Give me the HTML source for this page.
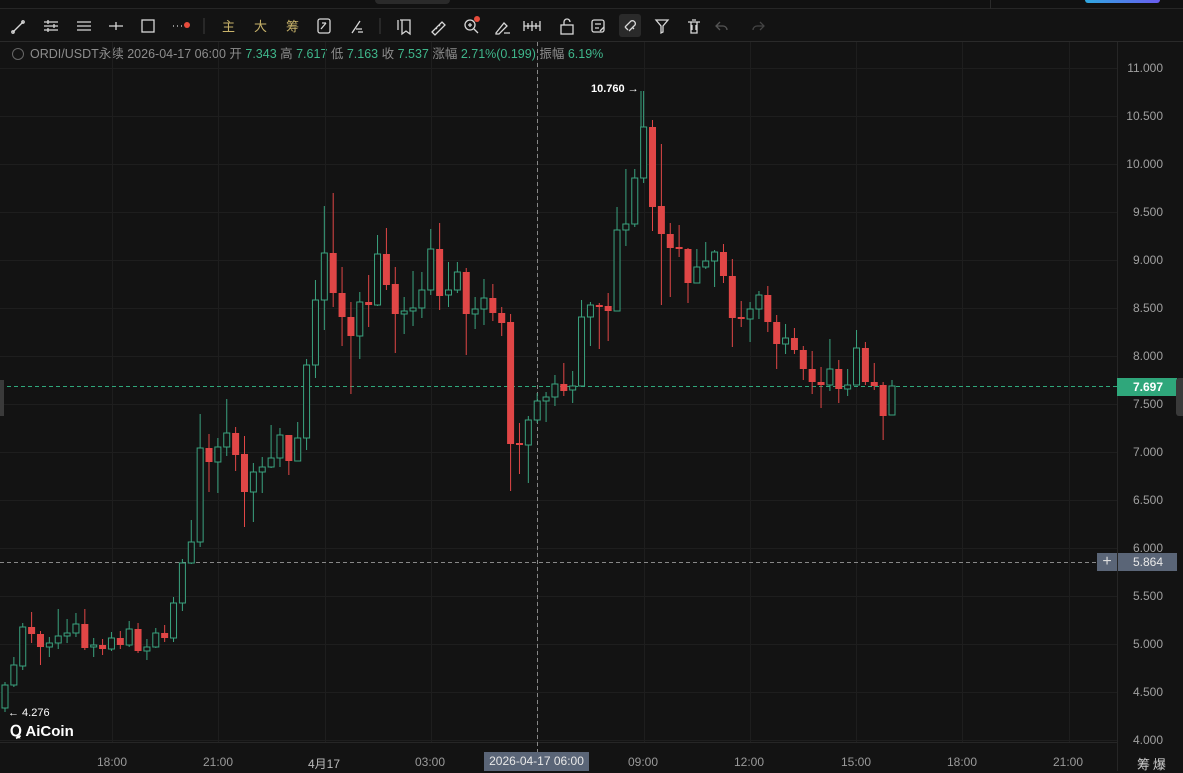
<!DOCTYPE html>
<html><head><meta charset="utf-8"><style>
*{margin:0;padding:0;box-sizing:border-box}
body{width:1183px;height:771px;background:#131313;overflow:hidden;font-family:"Liberation Sans","Noto Sans CJK SC",sans-serif;position:relative}
.top{position:absolute;left:0;top:0;width:1183px;height:9px;background:#111;border-bottom:1px solid #262626}
.tb{position:absolute;left:0;top:9px;width:1183px;height:33px;background:#131313;border-bottom:1px solid #2a2a2a}
.info{position:absolute;left:12px;top:43px;font-size:12.5px;color:#8d8d8d;white-space:nowrap}
.info b{font-weight:normal;color:#3fb68b}
.pl{position:absolute;right:20px;font-size:12px;color:#a0a0a0;text-align:right;width:60px}
.tl{position:absolute;top:755px;font-size:12px;color:#9a9a9a;transform:translateX(-50%)}
</style></head><body>
<div class="top"><div style="position:absolute;left:375px;top:0;width:75px;height:4px;background:#2a2a2a;border-radius:0 0 4px 4px"></div><div style="position:absolute;left:990px;top:0;width:1px;height:9px;background:#2a2a2a"></div><div style="position:absolute;left:1085px;top:0;width:75px;height:3px;background:linear-gradient(90deg,#2fa8e0,#6a5cf0);border-radius:0 0 6px 6px"></div></div>
<div class="tb"></div>
<svg style="position:absolute;left:0;top:9px" width="800" height="33" fill="none" stroke="#d8d8d8" stroke-width="1.3">
<path d="M13 23L23 13"/><circle cx="13" cy="23" r="1.2"/><circle cx="23" cy="13" r="1.2"/>
<path d="M44 13h14M44 17h14M44 21h14M48 11v4M54 15v4M48 19v4"/>
<path d="M77 13h14M77 17h14M77 21h14"/>
<path d="M109 17h14M116 13v8"/>
<rect x="142" y="11" width="12" height="12"/>
<path d="M173 17h1M177 17h1M181 17h1"/><circle cx="187" cy="16" r="3" fill="#e74c3c" stroke="none"/>
<path d="M204 9v16" stroke="#333"/>
<text x="222" y="22" font-size="13" fill="#c8b36a" stroke="none" font-family="Noto Sans CJK SC">主</text>
<text x="254" y="22" font-size="13" fill="#c8b36a" stroke="none" font-family="Noto Sans CJK SC">大</text>
<text x="286" y="22" font-size="13" fill="#c8b36a" stroke="none" font-family="Noto Sans CJK SC">筹</text>
<rect x="318" y="10" width="12" height="14" rx="2"/><path d="M321 20l5-6M322 14h4"/>
<path d="M352 24l8-12M356 20h6M358 23h5"/>
<path d="M380 9v16" stroke="#333"/>
<path d="M400 11h10v14l-4-3-4 3V11M398 11v10"/>
<path d="M432 23l10-10 3 3-10 10z M436 19l1 1M439 16l1 1"/>
<circle cx="470" cy="16" r="5"/><path d="M474 20l4 4M468 16h4M470 14v4"/><circle cx="477" cy="10" r="3" fill="#e74c3c" stroke="none"/>
<path d="M496 24l8-10 3 3-8 8h-3zM504 24h6"/>
<path d="M524 12v10M528 14v6M532 12v10M536 14v6M540 12v10M524 17h16"/>
<rect x="561" y="16" width="12" height="9"/><path d="M564 16v-3a3 3 0 0 1 6 0"/>
<rect x="592" y="11" width="12" height="12" rx="2"/><path d="M595 15h6M595 19h4M600 22l4-4"/>
<rect x="619" y="5" width="22" height="23" rx="3" fill="#2a2a2a" stroke="none"/>
<path d="M625 18l6-6a3 3 0 0 1 4 4l-6 6M628 21l-3-3M632 18l2 2"/>
<path d="M656 11h12l-5 6v6l-2 1v-7z"/>
<path d="M688 13h12M691 13v11h6V13M692 11h4M692 16v5M696 16v5"/>
<path d="M720 13l-4 4 4 4M716 17h7a4 4 0 0 1 4 4" stroke="#555"/>
<path d="M760 13l4 4-4 4M764 17h-7a4 4 0 0 0-4 4" stroke="#444"/>
</svg>
<div class="info"><span style="display:inline-block;width:12px;height:12px;border:1px solid #666;border-radius:50%;vertical-align:-2px;margin-right:6px"></span>ORDI/USDT永续 2026-04-17 06:00 开 <b>7.343</b> 高 <b>7.617</b> 低 <b>7.163</b> 收 <b>7.537</b> 涨幅 <b>2.71%(0.199)</b> 振幅 <b>6.19%</b></div>
<svg id="ch" style="position:absolute;left:0;top:0" width="1183" height="771"></svg>
<div class="pl" style="top:61px">11.000</div>
<div class="pl" style="top:109px">10.500</div>
<div class="pl" style="top:157px">10.000</div>
<div class="pl" style="top:205px">9.500</div>
<div class="pl" style="top:253px">9.000</div>
<div class="pl" style="top:301px">8.500</div>
<div class="pl" style="top:349px">8.000</div>
<div class="pl" style="top:397px">7.500</div>
<div class="pl" style="top:445px">7.000</div>
<div class="pl" style="top:493px">6.500</div>
<div class="pl" style="top:541px">6.000</div>
<div class="pl" style="top:589px">5.500</div>
<div class="pl" style="top:637px">5.000</div>
<div class="pl" style="top:685px">4.500</div>
<div class="pl" style="top:733px">4.000</div>
<div style="position:absolute;left:1117px;top:378px;width:60px;height:18px;background:#2fa77b;color:#fff;font-size:12px;font-weight:bold;line-height:18px;text-align:right;padding-right:14px">7.697</div>
<div style="position:absolute;left:1097px;top:553px;width:20px;height:18px;background:#5a6577;color:#ddd;font-size:16px;line-height:17px;text-align:center">+</div>
<div style="position:absolute;left:1118px;top:553px;width:59px;height:18px;background:#5a6577;color:#e8e8e8;font-size:12px;line-height:18px;text-align:right;padding-right:14px">5.864</div>
<div style="position:absolute;left:1176px;top:378px;width:7px;height:38px;background:#3a3a3a;border-radius:3px 0 0 3px"></div>
<div style="position:absolute;left:0;top:380px;width:4px;height:36px;background:#3a3a3a"></div>
<div class="tl" style="left:112px">18:00</div>
<div class="tl" style="left:218px">21:00</div>
<div class="tl" style="left:324px;color:#bbb">4月17</div>
<div class="tl" style="left:430px">03:00</div>
<div style="position:absolute;left:484px;top:752px;width:105px;height:19px;background:#5a6577;color:#e8e8e8;font-size:12px;line-height:19px;text-align:center">2026-04-17 06:00</div>
<div class="tl" style="left:643px">09:00</div>
<div class="tl" style="left:749px">12:00</div>
<div class="tl" style="left:962px">18:00</div>
<div class="tl" style="left:1068px">21:00</div>
<div class="tl" style="left:856px">15:00</div>
<div style="position:absolute;left:1137px;top:754px;font-size:13px;color:#ccc;font-family:'Noto Sans CJK SC',sans-serif">筹 爆</div>
<div style="position:absolute;left:8px;top:707px;font-size:11px;color:#fff">← 4.276</div>
<div style="position:absolute;left:591px;top:83px;font-size:11px;color:#fff;font-weight:bold">10.760 →</div>
<div style="position:absolute;left:10px;top:722px;font-size:15px;color:#fff;font-weight:bold">Ꝗ AiCoin</div>
<script>
var d=[
['g',685,708,682,712],['g',665,685,657,687],['g',627,666,623,670],['r',627,634,612,643],['r',634,647,631,665],['g',643,647,637,657],['g',636,643,609,649],['g',633,636,619,643],['g',624,633,613,637],['r',624,648,609,650],
['g',645,647,638,657],['r',645,649,639,655],['g',638,649,632,651],['r',638,645,631,649],['g',629,645,621,647],['r',629,651,623,653],['g',647,651,639,660],['g',633,647,628,648],['r',633,638,625,642],['g',603,638,597,642],
['g',563,603,559,611],['g',542,563,520,564],['g',448,542,414,547],['r',448,462,434,492],['g',447,462,438,493],['g',433,447,399,456],['r',433,455,427,471],['r',454,492,436,527],['g',472,492,463,522],['g',467,472,457,493],
['g',458,467,425,468],['g',435,458,428,467],['r',435,461,435,475],['g',438,461,422,461],['g',365,438,359,450],['g',300,365,280,378],['g',253,300,206,330],['r',253,293,193,307],['r',293,317,267,346],['r',317,336,302,394],
['g',302,336,292,359],['r',302,305,275,327],['g',254,305,235,306],['r',254,285,228,290],['r',284,314,267,353],['g',311,314,297,334],['g',308,311,271,326],['g',290,308,272,318],['g',249,290,229,295],['r',249,296,223,310],
['g',290,295,262,307],['g',272,290,262,293],['r',272,314,268,355],['g',309,314,297,329],['g',298,309,279,325],['r',298,313,284,321],['r',313,323,307,336],['r',322,444,314,491],['r',443,445,423,474],['g',420,445,416,483],
['g',401,420,393,423],['g',397,401,392,422],['g',384,397,375,406],['r',384,391,363,396],['g',386,390,371,403],['g',317,386,300,386],['g',305,317,302,346],['r',305,307,303,349],['r',306,311,293,341],['g',230,311,207,311],
['g',224,230,169,246],['g',178,224,169,227],['g',127,178,91,183],['r',127,207,120,231],['r',206,234,144,305],['r',234,248,223,297],['r',247,249,225,257],['r',249,283,248,303],['g',267,283,249,283],['g',261,267,242,269],
['g',252,261,250,287],['r',252,276,244,283],['r',276,318,259,347],['r',317,319,301,327],['g',309,319,302,342],['g',295,309,291,319],['r',295,322,286,332],['r',322,344,315,369],['g',338,344,324,354],['r',338,350,328,354],
['r',350,369,346,380],['r',369,382,351,394],['r',382,385,367,408],['g',369,385,339,391],['r',369,389,360,403],['g',385,389,369,396],['g',348,385,330,385],['r',348,382,342,385],['r',382,386,363,390],['r',385,416,382,440],
['g',386,415,380,415]];
var s='';
for(var y=68;y<=740;y+=48)s+='<line x1="0" x2="1117" y1="'+(y+.5)+'" y2="'+(y+.5)+'" stroke="#1e1e1e"/>';
for(var i=0;i<10;i++){var x=Math.round(112+i*106.3)+.5;s+='<line x1="'+x+'" x2="'+x+'" y1="42" y2="742" stroke="#1e1e1e"/>';}
s+='<line x1="1117.5" x2="1117.5" y1="42" y2="771" stroke="#262626"/><line x1="0" x2="1117" y1="742.5" y2="742.5" stroke="#262626"/>';
s+='<line x1="537.5" x2="537.5" y1="42" y2="752" stroke="#888" stroke-dasharray="4 3"/>';
s+='<line x1="0" x2="1097" y1="562.5" y2="562.5" stroke="#888" stroke-dasharray="4 3"/>';
s+='<line x1="0" x2="1117" y1="386.5" y2="386.5" stroke="#2fa77b" stroke-dasharray="4 3"/>';
d.forEach(function(c,i){var x=5+i*8.87;var col=c[0]=='g'?'#3aa37f':'#e04646';
s+='<line x1="'+x+'" x2="'+x+'" y1="'+c[3]+'" y2="'+c[4]+'" stroke="'+col+'"/>';
var h=Math.max(c[2]-c[1],2);
if(c[0]=='g')s+='<rect x="'+(x-3)+'" y="'+c[1]+'" width="6" height="'+h+'" fill="#131313" stroke="'+col+'"/>';
else s+='<rect x="'+(x-3.5)+'" y="'+c[1]+'" width="7" height="'+h+'" fill="'+col+'"/>';});
s+='<line x1="641" x2="641" y1="91" y2="127" stroke="#3aa37f"/>';
document.getElementById('ch').innerHTML=s;
</script>
</body></html>
